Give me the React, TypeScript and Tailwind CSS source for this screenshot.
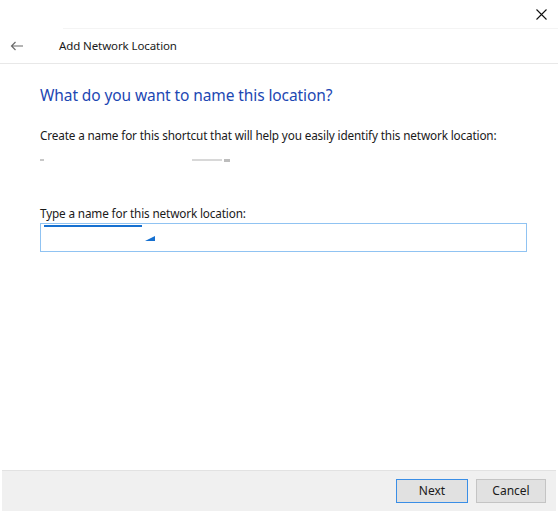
export default function App() {
  return (
    <div
      className="w-[558px] h-[513px] bg-white flex flex-col text-[#1a1a1a] relative"
      style={{ fontFamily: '"Noto Sans", "Open Sans", sans-serif' }}
    >
      {/* title bar */}
      <div className="h-[29px] flex justify-end items-center pr-[11px] border-b border-[#f4f4f4] ml-[63px]">
        <svg width="11" height="11" viewBox="0 0 11 11" className="mt-[1px]">
          <path d="M0.5 0.5L10.5 10.5M10.5 0.5L0.5 10.5" stroke="#111" strokeWidth="1.1" />
        </svg>
      </div>

      {/* wizard header */}
      <div className="h-[35px] flex items-center border-b border-[#e8e8e8]">
        <svg width="14" height="10" viewBox="0 0 14 10" className="ml-[10px] mt-[-1px]">
          <path d="M13 5H1.5M5.5 1L1.5 5L5.5 9" stroke="#6b6b6b" strokeWidth="1.2" fill="none" />
        </svg>
        <span className="ml-[35px] text-[11.5px] text-[#1a1a1a] tracking-[-0.1px]">Add Network Location</span>
      </div>

      {/* content */}
      <div className="flex-1 pl-[40px] pr-[31px] flex flex-col">
        <h1 className="mt-[20px] text-[15.5px] leading-[22px] text-[#1c47b3] tracking-[-0.1px]">
          What do you want to name this location?
        </h1>
        <p className="mt-[21px] text-[11.75px] leading-[16px] tracking-[-0.15px]">
          Create a name for this shortcut that will help you easily identify this network location:
        </p>
        <div className="mt-[14px] h-[6px] flex items-center">
          <span className="w-[4px] h-[2px] bg-[#c8c8c8]" />
          <span className="ml-[148px] w-[30px] h-[2px] bg-[#d8d8d8]" />
          <span className="ml-[2px] w-[6px] h-[3px] bg-[#bdbdbd]" />
        </div>
        <label className="mt-[42px] text-[11.75px] leading-[16px] tracking-[-0.15px]">
          Type a name for this network location:
        </label>
        <div className="mt-[2px] h-[29px] border border-[#90c3f2] relative">
          <div className="absolute left-[3px] top-[1px] w-[98px] h-[2px] bg-[#1670d0]" />
          <svg width="10" height="5" viewBox="0 0 10 5" className="absolute left-[104px] top-[12px]">
            <path d="M10 0L10 5L0 5Z" fill="#1670d0" />
          </svg>
        </div>
      </div>

      {/* footer */}
      <div className="h-[41px] mb-[2px] ml-[2px] mr-[2px] bg-[#f0f0f0] border-t border-[#e2e2e2] flex items-center justify-end gap-[8px] pr-[10px]">
        <button className="w-[72px] h-[24px] bg-[#e1e1e1] border border-[#3a8ee6] text-[12px] text-[#1a1a1a]">
          Next
        </button>
        <button className="w-[70px] h-[24px] bg-[#e1e1e1] border border-[#c4c4c4] text-[12px] text-[#1a1a1a]">
          Cancel
        </button>
      </div>
    </div>
  );
}
